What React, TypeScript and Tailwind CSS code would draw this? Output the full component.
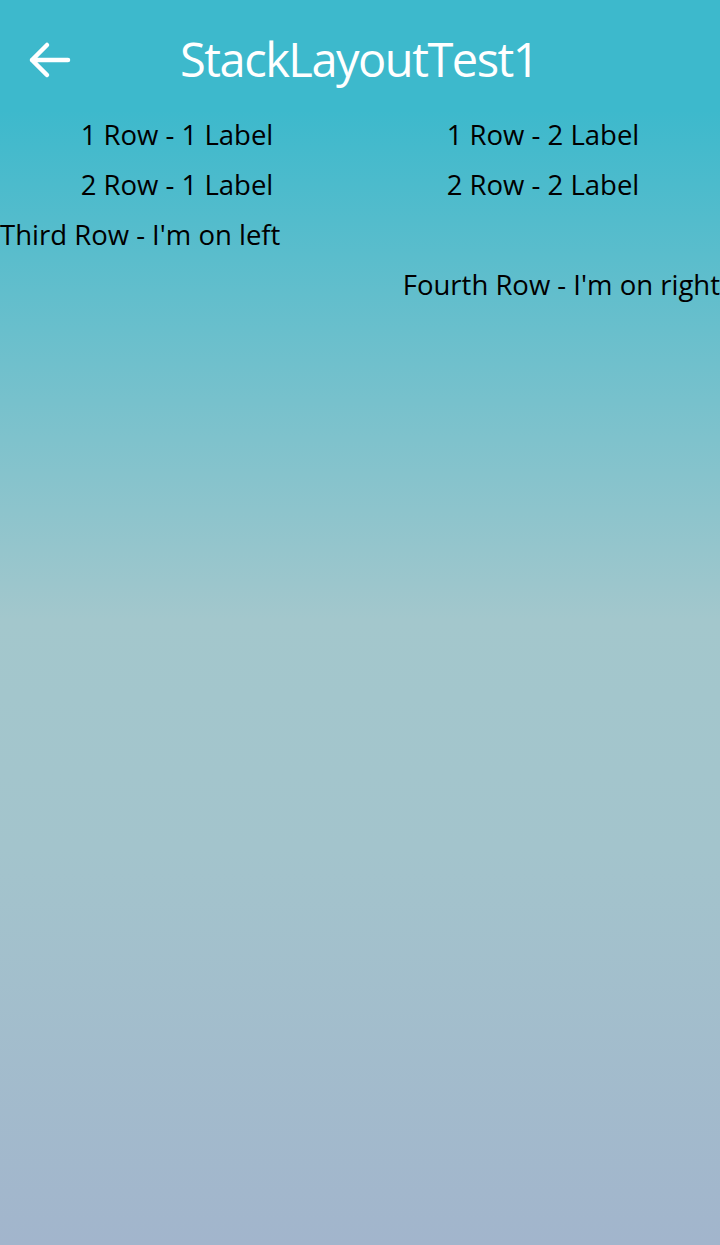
import React from 'react'

function BackArrow() {
  return (
    <svg width="54" height="44" viewBox="0 0 54 44" className="block">
      <path
        d="M12 21 L48 21 M12 21 L27 6 M12 21 L27 36"
        stroke="white"
        strokeWidth="4.5"
        strokeLinecap="round"
        strokeLinejoin="round"
        fill="none"
      />
    </svg>
  )
}

export default function App() {
  return (
    <div
      className="w-[720px] h-[1245px] flex flex-col overflow-hidden text-black"
      style={{ fontFamily: '"Open Sans", "Noto Sans", sans-serif' }}
    >
      <header className="h-[110px] shrink-0 bg-[#3db9cc] flex items-center">
        <div className="w-[180px] pl-[20px] pt-[12px] flex items-center">
          <BackArrow />
        </div>
        <h1 className="text-[47px] text-white tracking-[-1.5px] leading-none mt-[8px]">StackLayoutTest1</h1>
      </header>

      <main className="flex-1 bg-[linear-gradient(to_bottom,#3db9cc_0%,#a3c7cc_45%,#a3c4cc_65%,#a2b5cc_100%)] text-[27.5px]">
        <div className="flex h-[50px] items-center">
          <div className="w-1/2 text-center pr-[6px]">1 Row - 1 Label</div>
          <div className="w-1/2 text-center pl-[6px]">1 Row - 2 Label</div>
        </div>
        <div className="flex h-[50px] items-center">
          <div className="w-1/2 text-center pr-[6px]">2 Row - 1 Label</div>
          <div className="w-1/2 text-center pl-[6px]">2 Row - 2 Label</div>
        </div>
        <div className="flex h-[50px] items-center">
          <div>Third Row - I'm on left</div>
        </div>
        <div className="flex h-[50px] items-center justify-end">
          <div>Fourth Row - I'm on right</div>
        </div>
      </main>
    </div>
  )
}
